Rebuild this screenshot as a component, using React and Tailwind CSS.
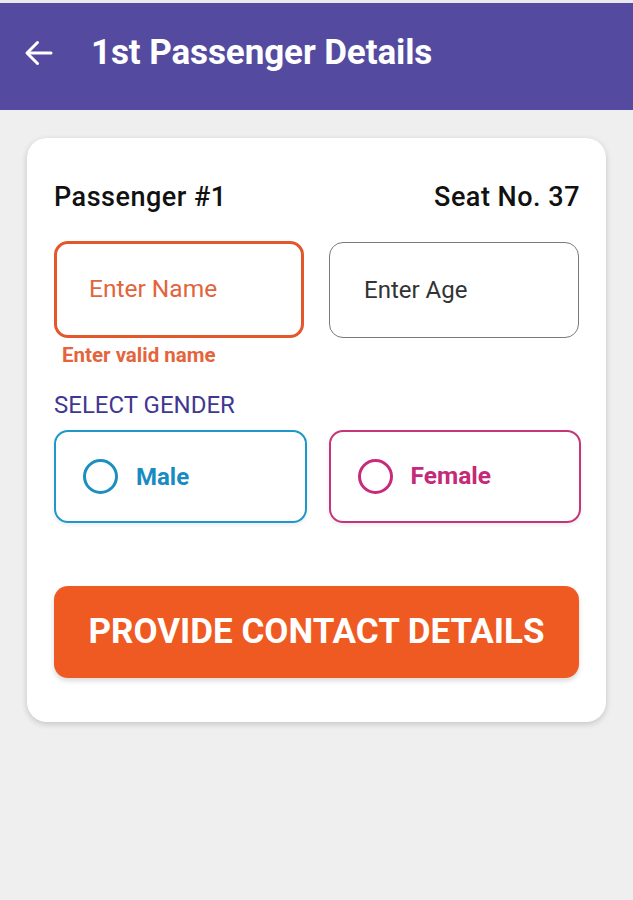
import React, { useState } from 'react';

export default function App() {
  const [gender, setGender] = useState(null);

  return (
    <div className="min-h-[900px] bg-[#efefef]" style={{ fontFamily: 'Roboto, "Noto Sans", sans-serif' }}>
      {/* Top bar */}
      <div className="h-[3px] bg-[#e9e9ef]" />
      <header className="h-[107px] bg-[#544ba0] flex items-center pb-[8px]">
        <button className="ml-[20px] w-[38px] h-[38px] flex items-center justify-center text-white">
          <svg width="36" height="36" viewBox="0 0 24 24" fill="none" stroke="currentColor" strokeWidth="2" strokeLinecap="round" strokeLinejoin="round">
            <path d="M20 12H5" />
            <path d="M11 5l-7 7 7 7" />
          </svg>
        </button>
        <h1 className="ml-[33px] text-white text-[35px] leading-[40px] font-bold tracking-[-0.1px]">1st Passenger Details</h1>
      </header>

      <div className="px-[27px] pt-[28px]">
        <div className="bg-white rounded-[20px] shadow-[0_2px_6px_rgba(0,0,0,0.18)] px-[27px] pt-[43px] pb-[44px]">
          <div className="flex justify-between items-center text-[27px] leading-[32px] font-medium tracking-[0.5px] text-[#111]">
            <span>Passenger #1</span>
            <span className="mr-[-1px]">Seat No. 37</span>
          </div>

          {/* Inputs */}
          <div className="mt-[28px] grid grid-cols-2 gap-[25px]">
            <div>
              <div className="h-[97px] rounded-[14px] border-[3px] border-[#e4572b] flex items-center px-[32px]">
                <span className="text-[24.5px] text-[#e2643c]">Enter Name</span>
              </div>
              <p className="mt-[5px] ml-[8px] text-[20.5px] leading-[24px] font-bold text-[#e4643c]">Enter valid name</p>
            </div>
            <div className="h-[96px] mt-[1px] rounded-[14px] border-[1.5px] border-[#7a7a7a] flex items-center px-[34px]">
              <span className="text-[24px] text-[#333]">Enter Age</span>
            </div>
          </div>

          <p className="mt-[24px] text-[24px] leading-[28px] text-[#3f3893] uppercase">Select Gender</p>

          {/* Gender */}
          <div className="mt-[11px] grid grid-cols-2 gap-[22px] mr-[-2px]">
            <button
              onClick={() => setGender('male')}
              className="h-[93px] rounded-[14px] border-2 border-[#1e98c9] flex items-center pl-[27px] gap-[18px] shadow-[0_2px_4px_rgba(0,0,0,0.08)]"
            >
              <span className="w-[35px] h-[35px] rounded-full border-[3px] border-[#1a8fc0] flex items-center justify-center">
                {gender === 'male' && <span className="w-[17px] h-[17px] rounded-full bg-[#1a8fc0]" />}
              </span>
              <span className="text-[24px] font-bold text-[#1a8bc2]">Male</span>
            </button>
            <button
              onClick={() => setGender('female')}
              className="h-[93px] rounded-[14px] border-2 border-[#c73579] flex items-center pl-[27px] gap-[18px] shadow-[0_2px_4px_rgba(0,0,0,0.08)]"
            >
              <span className="w-[35px] h-[35px] rounded-full border-[3px] border-[#c92b7c] flex items-center justify-center">
                {gender === 'female' && <span className="w-[17px] h-[17px] rounded-full bg-[#c92b7c]" />}
              </span>
              <span className="text-[24.5px] font-bold text-[#c42a78]">Female</span>
            </button>
          </div>

          <button className="mt-[63px] w-full h-[92px] rounded-[14px] bg-[#ef5a22] text-white text-[35px] font-bold uppercase shadow-[0_3px_5px_rgba(0,0,0,0.15)]">
            Provide Contact Details
          </button>
        </div>
      </div>
    </div>
  );
}
